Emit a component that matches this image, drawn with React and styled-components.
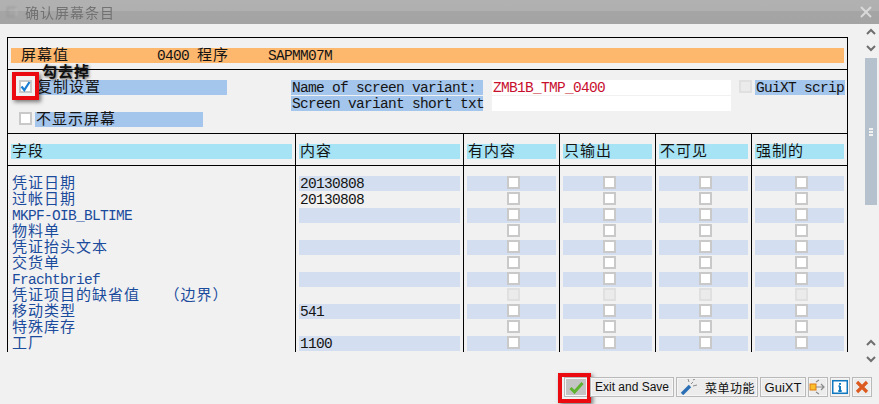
import React from 'react';
import styled, { createGlobalStyle } from 'styled-components';

const GlobalStyle = createGlobalStyle`
  html, body {
    margin: 0;
    padding: 0;
    background: #f1f1f1;
  }
`;

const Page = styled.div`
  width: 879px;
  height: 404px;
  display: flex;
  flex-direction: column;
  overflow: hidden;
  background: #f1f1f1;
  font-family: "Liberation Mono", "Noto Sans CJK SC", monospace;
  color: #141414;
`;

const TitleBar = styled.div`
  height: 24px;
  flex: none;
  display: flex;
  align-items: center;
  padding: 0 7px;
  gap: 8px;
  background: linear-gradient(#b1b1b1 0, #b0b0b0 11px, #a5a5a5 11px, #a4a4a4 100%);
`;

const TitleIcon = styled.div`
  width: 8px;
  height: 8px;
  border: 1px solid #969696;
  border-right-color: #bcbcbc;
  filter: blur(0.8px);
`;

const TitleText = styled.div`
  flex: 1;
  font-family: "Noto Sans CJK SC", sans-serif;
  font-size: 14px;
  line-height: 20px;
  letter-spacing: 1px;
  color: #727272;
  filter: blur(0.7px);
`;

const TitleClose = styled.svg`
  width: 12px;
  height: 12px;
  stroke: #d9d9d9;
  stroke-width: 2;
  fill: none;
`;

const Body = styled.div`
  height: 342px;
  flex: none;
  display: flex;
`;

const Main = styled.div`
  padding: 13px 0 0 7px;
`;

const Frame = styled.div`
  width: 839px;
  height: 314px;
  overflow: hidden;
  border: 1px solid #000;
  border-bottom: none;
  display: flex;
  flex-direction: column;
`;

const TopSection = styled.div`
  padding: 10px 3px 6px;
  border-bottom: 1px solid #000;
`;

const OrangeBar = styled.div`
  height: 15px;
  display: grid;
  grid-template-columns: 136px 40px 71px 1fr;
  padding-left: 10px;
  background: #fdb86e;
  line-height: 17px;
`;

const Text = styled.span`
  font-size: ${(p) => (p.$latin ? '14.5px' : '15px')};
  letter-spacing: ${(p) => (p.$latin ? '-0.7px' : '1px')};
  line-height: 17px;
  white-space: pre;
  color: ${(p) => p.$color || 'inherit'};
`;

const OptionSection = styled.div`
  height: 53px;
  padding: 10px 0 0 11px;
  border-bottom: 1px solid #000;
  display: flex;
`;

const OptionColumn = styled.div`
  width: 272px;
  display: flex;
  flex-direction: column;
  gap: 17px;
`;

const OptionRow = styled.div`
  display: flex;
  gap: 3px;
`;

const BlueLabel = styled.div`
  width: ${(p) => p.$w}px;
  height: 15px;
  padding-left: ${(p) => p.$pad ?? 1}px;
  box-sizing: border-box;
  background: #a4c5ec;
  line-height: 17px;
`;

const VariantGrid = styled.div`
  display: grid;
  grid-template-columns: 192px 239px;
  grid-auto-rows: 15px;
  column-gap: 9px;
  row-gap: 1px;
`;

const WhiteInput = styled.div`
  background: #fff;
  padding-left: 1px;
  line-height: 17px;
`;

const GuixtOption = styled.div`
  display: flex;
  gap: 3px;
  margin-left: 8px;
`;

const Box = styled.div`
  width: 9px;
  height: 9px;
  flex: none;
  border: 2px solid ${(p) => (p.$disabled ? '#e0e0e0' : '#c9c9c9')};
  background: ${(p) => (p.$disabled ? '#ebebeb' : '#fff')};
  display: flex;
  align-items: center;
  justify-content: center;
`;

const Highlight = styled.div`
  position: relative;
  flex: none;
  height: 13px;
`;

const RedBox = styled.div`
  position: absolute;
  border: 4px solid #ea0a0f;
  box-shadow: 2px 2px 4px rgba(0, 0, 0, 0.5);
  pointer-events: none;
`;

const CheckRedBox = styled(RedBox)`
  left: -7px;
  top: -8px;
  width: 19px;
  height: 20px;
`;

const ButtonRedBox = styled(RedBox)`
  left: -7px;
  top: -5px;
  width: 25px;
  height: 22px;
`;

const Annotation = styled.div`
  position: absolute;
  left: 23px;
  top: -15px;
  white-space: nowrap;
  font-family: "Noto Sans CJK SC", sans-serif;
  font-size: 15px;
  font-weight: 700;
  line-height: 11px;
  letter-spacing: 1px;
  color: #111;
  text-shadow: 1px 1px 3px rgba(0, 0, 0, 0.65);
`;

const TableRow = styled.div`
  display: grid;
  grid-template-columns: 288px 168px 96px 96px 96px 95px;
  border-bottom: ${(p) => (p.$head ? '1px solid #000' : 'none')};
`;

const Cell = styled.div`
  box-sizing: border-box;
  height: ${(p) => p.$h}px;
  padding: ${(p) => p.$pad || '0 3px 1px'};
  border-right: 1px solid #000;
  &:last-child {
    border-right: none;
  }
`;

const HeadBar = styled.div`
  height: 15px;
  padding-left: 1px;
  background: #a6e4f5;
  line-height: 17px;
`;

const FieldLabel = styled.div`
  height: 15px;
  padding-left: 1px;
  line-height: 17px;
  color: #1a4b9c;
  white-space: pre;
`;

const Shade = styled.div`
  height: 15px;
  display: flex;
  padding-left: ${(p) => p.$pad}px;
  background: ${(p) => (p.$on ? '#d3dff0' : 'transparent')};
  line-height: 17px;
`;

const ScrollBar = styled.div`
  width: 12px;
  margin-left: 17px;
  padding: 4px 0 3px;
  display: flex;
  flex-direction: column;
  align-items: center;
`;

const Chevron = styled.svg`
  width: 10px;
  height: 7px;
  flex: none;
  margin-top: ${(p) => p.$top || 0}px;
  fill: none;
  stroke: #6f6f6f;
  stroke-width: 2;
`;

const Thumb = styled.div`
  width: 12px;
  height: 147px;
  margin-top: 6px;
  margin-bottom: auto;
  background: #b5c1cd;
  display: flex;
  flex-direction: column;
  align-items: center;
  justify-content: center;
  gap: 1px;
`;

const Grip = styled.div`
  width: 4px;
  height: 2px;
  background: #f2f2f2;
`;

const Footer = styled.div`
  flex: 1;
  display: flex;
  justify-content: flex-end;
  gap: 2px;
  padding: 11px 7px 0 0;
`;

const Button = styled.div`
  position: relative;
  box-sizing: border-box;
  width: ${(p) => p.$w}px;
  height: 20px;
  display: flex;
  align-items: center;
  justify-content: ${(p) => p.$justify || 'center'};
  gap: ${(p) => p.$gap || 0}px;
  padding-left: ${(p) => p.$pad || 0}px;
  border: 1px solid #b9b9b9;
  box-shadow: inset 0 0 0 1px #f6f6f6;
  background: ${(p) => (p.$pressed ? '#c4c4c4' : '#ececec')};
  font-family: "Liberation Sans", "Noto Sans CJK SC", sans-serif;
  font-size: ${(p) => p.$size || 12}px;
  color: #111;
  white-space: nowrap;
`;

const MenuText = styled.span`
  font-family: "Noto Sans CJK SC", sans-serif;
  font-size: 12px;
  letter-spacing: 0.5px;
`;

const rows = [
  { label: '凭证日期', value: '20130808' },
  { label: '过帐日期', value: '20130808' },
  { label: 'MKPF-OIB_BLTIME', latin: true },
  { label: '物料单' },
  { label: '凭证抬头文本' },
  { label: '交货单' },
  { label: 'Frachtbrief', latin: true },
  { label: '凭证项目的缺省值\u3000\u3000（边界）', disabled: true },
  { label: '移动类型', value: '541' },
  { label: '特殊库存' },
  { label: '工厂', value: '1100' },
];

const headers = ['有内容', '只输出', '不可见', '强制的'];

function Tick() {
  return (
    <svg width="11" height="11" viewBox="0 0 11 11" style={{ overflow: 'visible' }}>
      <path d="M1.5 5.5 L4.3 9 L9.5 1" fill="none" stroke="#1a7fd2" strokeWidth="2.2" />
    </svg>
  );
}

function Table() {
  return (
    <>
      <TableRow $head>
        <Cell $h={31} $pad="10px 3px 6px">
          <HeadBar><Text>字段</Text></HeadBar>
        </Cell>
        <Cell $h={31} $pad="10px 3px 6px">
          <HeadBar><Text>内容</Text></HeadBar>
        </Cell>
        {headers.map((h) => (
          <Cell $h={31} $pad="10px 3px 6px" key={h}>
            <HeadBar><Text>{h}</Text></HeadBar>
          </Cell>
        ))}
      </TableRow>
      <TableRow>
        {[0, 1, 2, 3, 4, 5].map((i) => <Cell $h={10} $pad="0" key={i} />)}
      </TableRow>
      {rows.map((row, i) => (
        <TableRow key={row.label}>
          <Cell $h={16}>
            <FieldLabel><Text $latin={row.latin}>{row.label}</Text></FieldLabel>
          </Cell>
          <Cell $h={16}>
            <Shade $on={i % 2 === 0} $pad={1}><Text $latin>{row.value}</Text></Shade>
          </Cell>
          {headers.map((h) => (
            <Cell $h={16} key={h}>
              <Shade $on={i % 2 === 0} $pad={40}><Box $disabled={row.disabled} /></Shade>
            </Cell>
          ))}
        </TableRow>
      ))}
    </>
  );
}

export default function App() {
  return (
    <Page>
      <GlobalStyle />
      <TitleBar>
        <TitleIcon />
        <TitleText>确认屏幕条目</TitleText>
        <TitleClose viewBox="0 0 12 12"><path d="M1 1 L11 11 M11 1 L1 11" /></TitleClose>
      </TitleBar>
      <Body>
        <Main>
          <Frame>
            <TopSection>
              <OrangeBar>
                <Text>屏幕值</Text>
                <Text $latin>0400</Text>
                <Text>程序</Text>
                <Text $latin>SAPMM07M</Text>
              </OrangeBar>
            </TopSection>
            <OptionSection>
              <OptionColumn>
                <OptionRow>
                  <Highlight>
                    <Box><Tick /></Box>
                    <CheckRedBox />
                    <Annotation>勾去掉</Annotation>
                  </Highlight>
                  <BlueLabel $w={192} $pad={2}><Text>复制设置</Text></BlueLabel>
                </OptionRow>
                <OptionRow>
                  <Box />
                  <BlueLabel $w={168}><Text>不显示屏幕</Text></BlueLabel>
                </OptionRow>
              </OptionColumn>
              <VariantGrid>
                <BlueLabel $w={192}><Text $latin>Name of screen variant:</Text></BlueLabel>
                <WhiteInput><Text $latin $color="#c8102e">ZMB1B_TMP_0400</Text></WhiteInput>
                <BlueLabel $w={192}><Text $latin>Screen variant short txt</Text></BlueLabel>
                <WhiteInput />
              </VariantGrid>
              <GuixtOption>
                <Box $disabled />
                <BlueLabel $w={90} $pad={1}><Text $latin>GuiXT scrip</Text></BlueLabel>
              </GuixtOption>
            </OptionSection>
            <Table />
          </Frame>
        </Main>
        <ScrollBar>
          <Chevron viewBox="0 0 10 7"><path d="M1 6 L5 2 L9 6" /></Chevron>
          <Chevron viewBox="0 0 10 7" $top={10}><path d="M1 1 L5 5 L9 1" /></Chevron>
          <Thumb><Grip /><Grip /><Grip /></Thumb>
          <Chevron viewBox="0 0 10 7"><path d="M1 6 L5 2 L9 6" /></Chevron>
          <Chevron viewBox="0 0 10 7" $top={10}><path d="M1 1 L5 5 L9 1" /></Chevron>
        </ScrollBar>
      </Body>
      <Footer>
        <Button $w={24} $pressed>
          <svg width="15" height="13" viewBox="0 0 15 13">
            <path d="M1.5 7 L5.5 11 L13.5 2" fill="none" stroke="#5fb32e" strokeWidth="3" />
          </svg>
          <ButtonRedBox />
        </Button>
        <Button $w={84}>Exit and Save</Button>
        <Button $w={82} $justify="flex-start" $pad={3} $gap={7}>
          <svg width="18" height="16" viewBox="0 0 18 16">
            <path d="M2 15 L10 7" stroke="#2a6fb5" strokeWidth="3.4" fill="none" />
            <path d="M11 5 L13 3 M13 7 L17 6 M9 3 L8 0 M13 1 L15 0" stroke="#8a8a8a" strokeWidth="1" fill="none" />
          </svg>
          <MenuText>菜单功能</MenuText>
        </Button>
        <Button $w={46} $size={13}>GuiXT</Button>
        <Button $w={20}>
          <svg width="18" height="16" viewBox="0 0 18 16">
            <rect x="1" y="5" width="6" height="6" fill="#f9c02c" stroke="#e07a10" />
            <path d="M7 8 H15 M12 5 L15 8 L12 11 M7 3 L10 1 M7 13 L10 15" fill="none" stroke="#8a8a8a" strokeWidth="1.2" />
          </svg>
        </Button>
        <Button $w={20}>
          <svg width="16" height="14" viewBox="0 0 16 14">
            <rect x="0.75" y="0.75" width="14.5" height="12.5" fill="#fff" stroke="#1179c0" strokeWidth="1.5" />
            <path d="M8 3 V4.8 M8 6 V11 M6.5 6.3 H8 M6.3 11 H9.7" fill="none" stroke="#1179c0" strokeWidth="2" />
          </svg>
        </Button>
        <Button $w={20}>
          <svg width="14" height="14" viewBox="0 0 14 14">
            <path d="M2 2 L12 12 M12 2 L2 12" fill="none" stroke="#dc5a20" strokeWidth="3.2" />
          </svg>
        </Button>
      </Footer>
    </Page>
  );
}
